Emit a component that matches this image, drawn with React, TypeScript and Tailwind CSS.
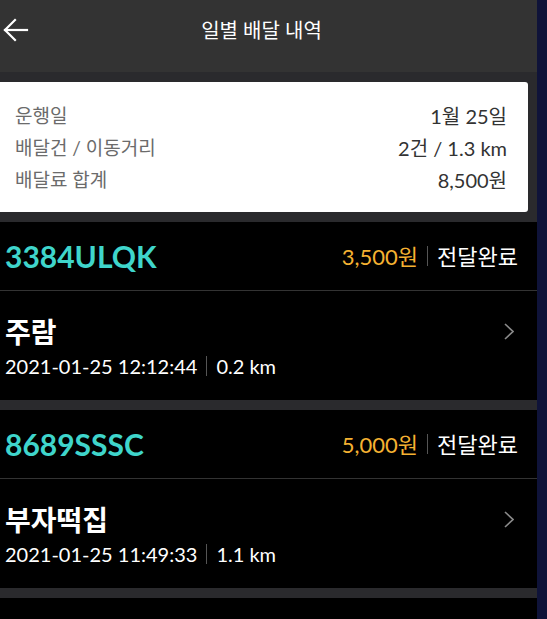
const font = { fontFamily: "Lato, 'Noto Sans CJK KR', sans-serif" };

const summary = [
    { label: "운행일", value: "1월 25일" },
    { label: "배달건 / 이동거리", value: "2건 / 1.3 km" },
    { label: "배달료 합계", value: "8,500원" },
];

const orders = [
    { code: "3384ULQK", fee: "3,500원", status: "전달완료", shop: "주람", time: "2021-01-25 12:12:44", dist: "0.2 km" },
    { code: "8689SSSC", fee: "5,000원", status: "전달완료", shop: "부자떡집", time: "2021-01-25 11:49:33", dist: "1.1 km" },
];

const BackArrow = () => (
    <svg width="26" height="24" viewBox="0 0 26 24" fill="none" stroke="white" strokeWidth="2.2" strokeLinecap="square">
        <path d="M2 12h22" />
        <path d="M12 2L2 12l10 10" />
    </svg>
);

const Chevron = () => (
    <svg width="10" height="17" viewBox="0 0 10 17" fill="none" stroke="#8a8a8a" strokeWidth="1.6">
        <path d="M1 1l8 7.5L1 16" />
    </svg>
);

const OrderItem = ({ code, fee, status, shop, time, dist }: typeof orders[number]) => (
    <div className="bg-black">
        <div className="h-[69px] flex items-center justify-between pl-[5px] pr-[19px] border-b border-[#333]">
            <span className="text-[30px] font-bold text-[#3fd5cb]">{code}</span>
            <div className="flex items-center text-[22px]">
                <span className="text-[#f5b232]">{fee}</span>
                <span className="mx-[9px] w-px h-[20px] bg-[#555]"></span>
                <span className="text-white">{status}</span>
            </div>
        </div>
        <div className="h-[109px] flex justify-between pl-[5px] pr-[23px] pt-[24px]">
            <div className="flex flex-col">
                <span className="text-[28px] font-bold text-white leading-[34px]">{shop}</span>
                <div className="flex items-center mt-[4px] text-[20px] text-white leading-[26px]">
                    <span>{time}</span>
                    <span className="mx-[9px] w-px h-[20px] bg-[#555]"></span>
                    <span>{dist}</span>
                </div>
            </div>
            <div className="mt-[8px]">
                <Chevron />
            </div>
        </div>
        <div className="h-[10px] bg-[#2a2a2d]"></div>
    </div>
);

export default function App() {
    return (
        <div className="flex w-[547px] h-[619px] overflow-hidden" style={font}>
            <div className="w-[537px] bg-black flex flex-col">
                <div className="h-[72px] bg-[#333333] relative flex items-start justify-center pt-[15px]">
                    <div className="absolute left-[3px] top-[18px]">
                        <BackArrow />
                    </div>
                    <span className="text-white text-[20px] leading-[30px] mr-[14px]">일별 배달 내역</span>
                </div>
                <div className="bg-[#2a2a2d] py-[10px] pr-[9px]">
                    <div className="bg-white rounded-r-[3px] pl-[15px] pr-[21px] pt-[18px] pb-[16px] text-[19px] leading-[32px]">
                        {summary.map((row) => (
                            <div key={row.label} className="flex justify-between">
                                <span className="text-[#6b6b6b]">{row.label}</span>
                                <span className="text-[#333] text-[20px]">{row.value}</span>
                            </div>
                        ))}
                    </div>
                </div>
                {orders.map((o) => (
                    <OrderItem key={o.code} {...o} />
                ))}
            </div>
            <div className="w-[10px] bg-[#0f1339]"></div>
        </div>
    );
}
